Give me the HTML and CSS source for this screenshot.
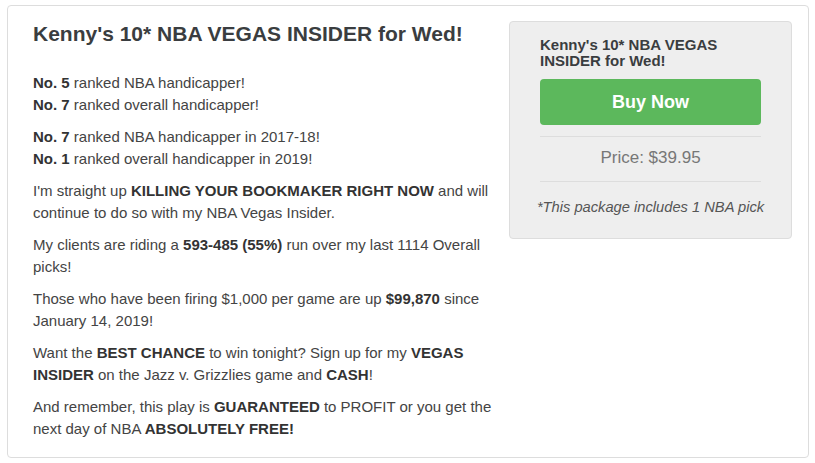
FILE: index.html
```html
<!DOCTYPE html>
<html>
<head>
<meta charset="utf-8">
<link rel="stylesheet" href="styles.css">
</head>
<body>
<div class="card">
  <div class="main">
    <h1 class="title">Kenny's 10* NBA VEGAS INSIDER for Wed!</h1>
    <p><b>No. 5</b> ranked NBA handicapper!<br><b>No. 7</b> ranked overall handicapper!</p>
    <p><b>No. 7</b> ranked NBA handicapper in 2017-18!<br><b>No. 1</b> ranked overall handicapper in 2019!</p>
    <p>I'm straight up <b>KILLING YOUR BOOKMAKER RIGHT NOW</b> and will continue to do so with my NBA Vegas Insider.</p>
    <p>My clients are riding a <b>593-485 (55%)</b> run over my last 1114 Overall picks!</p>
    <p>Those who have been firing $1,000 per game are up <b>$99,870</b> since January 14, 2019!</p>
    <p>Want the <b>BEST CHANCE</b> to win tonight? Sign up for my <b>VEGAS INSIDER</b> on the Jazz v. Grizzlies game and <b>CASH</b>!</p>
    <p>And remember, this play is <b>GUARANTEED</b> to PROFIT or you get the next day of NBA <b>ABSOLUTELY FREE!</b></p>
  </div>
  <div class="side">
    <div class="well">
      <div class="well-title">Kenny's 10* NBA VEGAS INSIDER for Wed!</div>
      <button class="buy">Buy Now</button>
      <div class="price">Price: $39.95</div>
      <div class="note">*This package includes 1 NBA pick</div>
    </div>
  </div>
</div>
</body>
</html>
```
FILE: styles.css
```css
html, body {
  margin: 0;
  padding: 0;
  background: #fff;
}
body {
  padding: 5px 6px 4px 7px;
  font-family: "Liberation Sans", Arial, sans-serif;
  color: #444;
}
.card {
  border: 1px solid #ddd;
  border-radius: 4px;
  height: 453px;
  box-sizing: border-box;
  display: grid;
  grid-template-columns: 460px 283px;
  column-gap: 16px;
  padding: 0 0 0 25px;
}
.main {
  padding-top: 17px;
}
.title {
  margin: 0 0 27px;
  font-size: 21px;
  line-height: 22px;
  font-weight: bold;
  color: #3a3d40;
}
.main p {
  margin: 0 0 10px;
  font-size: 15px;
  line-height: 22px;
}
.main b {
  color: #333;
}
.side {
  padding-top: 15px;
}
.well {
  background: #eee;
  border: 1px solid #ddd;
  border-radius: 4px;
  padding: 15px 30px 21px;
}
.well-title {
  font-size: 15px;
  line-height: 16px;
  font-weight: bold;
  color: #3a3d40;
  margin-bottom: 10px;
}
.buy {
  display: block;
  width: 100%;
  height: 46px;
  border: none;
  border-radius: 4px;
  background: #5cb85c;
  color: #fff;
  font-family: "Liberation Sans", Arial, sans-serif;
  font-size: 18px;
  font-weight: bold;
  margin-bottom: 11px;
}
.price {
  border-top: 1px solid #ddd;
  border-bottom: 1px solid #ddd;
  text-align: center;
  color: #777;
  font-size: 17px;
  line-height: 20px;
  padding: 11px 0 13px;
}
.note {
  text-align: center;
  font-style: italic;
  font-size: 14.7px;
  line-height: 20px;
  color: #555;
  padding-top: 15px;
  margin: 0 -6px;
  white-space: nowrap;
}
```
